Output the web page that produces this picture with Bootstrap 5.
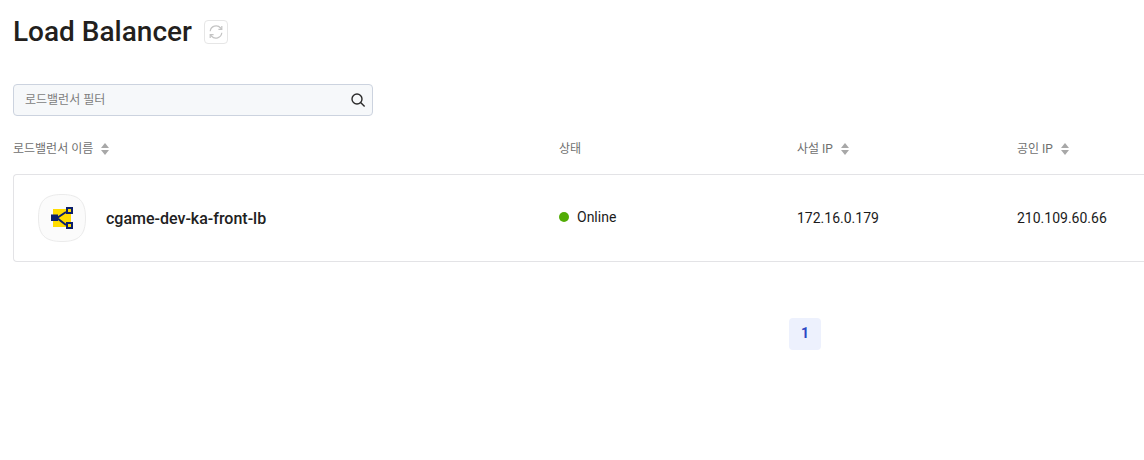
<!DOCTYPE html>
<html lang="ko">
<head>
    <meta charset="UTF-8">
    <title>Load Balancer</title>
    <meta name="viewport" content="width=device-width, initial-scale=1">
    <link href="https://cdn.jsdelivr.net/npm/bootstrap@5.3.3/dist/css/bootstrap.min.css" rel="stylesheet">
    <script src="https://cdn.jsdelivr.net/npm/bootstrap@5.3.3/dist/js/bootstrap.bundle.min.js"></script>
    <style>
        html, body {
            height: 460px;
            overflow: hidden;
        }
        body {
            background: #fff;
            font-family: Roboto, "Noto Sans CJK KR", sans-serif;
            color: #1f1f1f;
        }
        .lb-page {
            padding: 13px 0 0 13px;
        }
        .lb-title {
            font-size: 28px;
            font-weight: 500;
            line-height: 37px;
            color: #231f1d;
            margin: 0;
        }
        .lb-refresh {
            width: 24px;
            height: 24px;
            margin-left: 12px;
            padding: 0;
            border: 1px solid #e6e6e6;
            border-radius: 4px;
            background: #fff;
        }
        .lb-filter {
            width: 360px;
            height: 32px;
            margin-top: 34px;
            padding: 0 6px 0 11px;
            background: #f6f8fa;
            border: 1px solid #ccd3df;
            border-radius: 4px;
        }
        .lb-filter input {
            background: transparent;
            border: 0;
            outline: 0;
            font-size: 12px;
            padding: 0;
            flex: 1;
        }
        .lb-filter input::placeholder {
            color: #7d7d7d;
            opacity: 1;
        }
        .lb-cols {
            display: grid;
            grid-template-columns: 546px 238px 220px 1fr;
            align-items: center;
        }
        .lb-head {
            height: 58px;
            padding-top: 8px;
            font-size: 12px;
            color: #6f6f6f;
        }
        .lb-row {
            grid-template-columns: 545px 238px 220px 1fr;
            height: 88px;
            border: 1px solid #e3e3e6;
            border-right: 0;
            border-radius: 4px 0 0 4px;
            background: #fff;
        }
        .lb-name {
            padding-left: 24px;
            gap: 20px;
            font-size: 16px;
            font-weight: 500;
            color: #212121;
        }
        .lb-name span {
            padding-top: 2px;
        }
        .lb-cell {
            font-size: 14px;
            color: #1b1b1b;
        }
        .lb-dot {
            width: 10px;
            height: 10px;
            border-radius: 50%;
            background: #52ac06;
            margin-right: 8px;
        }
        .lb-online {
            padding-bottom: 2px;
        }
        .lb-pager {
            margin: 56px 0 0 776px;
            width: 32px;
            height: 32px;
            padding-bottom: 2px;
            border-radius: 4px;
            background: #edf1fd;
            color: #2d46c4;
            font-size: 14px;
            font-weight: 700;
        }
    </style>
</head>
<body>
    <div class="lb-page">
        <!-- Title -->
        <div class="d-flex align-items-center">
            <h1 class="lb-title">Load Balancer</h1>
            <button type="button" class="lb-refresh d-flex align-items-center justify-content-center" aria-label="refresh">
                <svg width="16" height="16" viewBox="0 0 16 16" fill="none" stroke="#c4c4c4" stroke-width="1.2">
                    <path d="M2.2 7.2A5.9 5.9 0 0 1 12.6 4l1 1.2"/>
                    <path d="M13.8 2v3.4h-3.4"/>
                    <path d="M13.8 8.8A5.9 5.9 0 0 1 3.4 12l-1-1.2"/>
                    <path d="M2.2 14v-3.4h3.4"/>
                </svg>
            </button>
        </div>

        <!-- Filter -->
        <div class="lb-filter d-flex align-items-center">
            <input type="text" placeholder="로드밸런서 필터">
            <svg width="16" height="16" viewBox="0 0 16 16" fill="none" stroke="#2b2b2b" stroke-width="1.4">
                <circle cx="7" cy="7" r="5"/>
                <path d="M10.6 10.6l4 4"/>
            </svg>
        </div>

        <!-- Table header -->
        <div class="lb-cols lb-head">
            <div class="d-flex align-items-center">로드밸런서 이름
                <svg class="ms-2" width="8" height="12" viewBox="0 0 8 12" fill="#a8a8a8"><path d="M4 0l4 5H0zM4 12L0 7h8z"/></svg>
            </div>
            <div>상태</div>
            <div class="d-flex align-items-center">사설 IP
                <svg class="ms-2" width="8" height="12" viewBox="0 0 8 12" fill="#a8a8a8"><path d="M4 0l4 5H0zM4 12L0 7h8z"/></svg>
            </div>
            <div class="d-flex align-items-center">공인 IP
                <svg class="ms-2" width="8" height="12" viewBox="0 0 8 12" fill="#a8a8a8"><path d="M4 0l4 5H0zM4 12L0 7h8z"/></svg>
            </div>
        </div>

        <!-- Row -->
        <div class="lb-cols lb-row">
            <div class="lb-name d-flex align-items-center">
                <svg width="48" height="48" viewBox="0 0 48 48">
                    <path d="M24 .5C41 .5 47.500 7 47.500 24S41 47.500 24 47.500 .5 41 .5 24 7 .5 24 .5z" fill="#fbfbfb" stroke="#ebebeb"/>
                    <rect x="15" y="15" width="18" height="18" fill="#ffdc00"/>
                    <rect x="13" y="20.500" width="7" height="6.500" fill="#0b1f6b"/>
                    <path d="M19 24l9-6M19 24l9 7" stroke="#0b1f6b" stroke-width="2" fill="none"/>
                    <rect x="29" y="14" width="5" height="5" fill="#ffdc00" stroke="#0b1f6b" stroke-width="2"/>
                    <rect x="29" y="29" width="5" height="5" fill="#ffdc00" stroke="#0b1f6b" stroke-width="2"/>
                </svg>
                <span>cgame-dev-ka-front-lb</span>
            </div>
            <div class="lb-cell lb-online d-flex align-items-center"><span class="lb-dot"></span>Online</div>
            <div class="lb-cell">172.16.0.179</div>
            <div class="lb-cell">210.109.60.66</div>
        </div>

        <!-- Pagination -->
        <div class="lb-pager d-flex align-items-center justify-content-center">1</div>
    </div>
</body>
</html>
